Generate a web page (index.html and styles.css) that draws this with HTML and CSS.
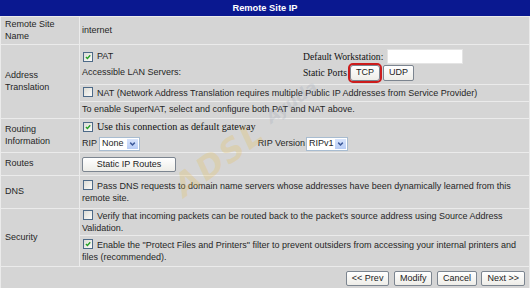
FILE: index.html
```html
<!DOCTYPE html>
<html lang="en">
<head>
  <meta charset="UTF-8" />
  <title>Remote Site IP</title>
  <link rel="stylesheet" href="styles.css">
</head>
<body>
  <div class="page">
    <div class="title">Remote Site IP</div>

    <table class="form">
      <tr>
        <td class="lbl h-name">Remote Site Name</td>
        <td class="val">internet</td>
      </tr>
      <tr>
        <td class="lbl" rowspan="3">Address Translation</td>
        <td class="val h-pat">
          <div class="pat-grid">
            <div class="line"><span class="cb on"><svg viewBox="0 0 10 10"><path d="M2.4 4.9 L4.3 6.9 L7.8 2.9" /></svg></span>PAT</div>
            <div class="line serif">Default Workstation:<span class="txt"></span></div>
            <div class="line">Accessible LAN Servers:</div>
            <div class="line serif">Static Ports <button class="btn marked">TCP</button><button class="btn">UDP</button></div>
          </div>
        </td>
      </tr>
      <tr>
        <td class="val h-nat"><span class="cb"></span>NAT (Network Address Translation requires multiple Public IP Addresses from Service Provider)</td>
      </tr>
      <tr>
        <td class="val h-nat">To enable SuperNAT, select and configure both PAT and NAT above.</td>
      </tr>
      <tr>
        <td class="lbl">Routing Information</td>
        <td class="val h-rip">
          <div class="line serif big"><span class="cb on"><svg viewBox="0 0 10 10"><path d="M2.4 4.9 L4.3 6.9 L7.8 2.9" /></svg></span>Use this connection as default gateway</div>
          <div class="line rip-line">
            <span class="rip">RIP <span class="sel w-none"><span class="sel-txt">None</span><span class="sel-btn"><svg viewBox="0 0 12 11"><path d="M3.5 4 L6 6.5 L8.5 4" /></svg></span></span></span>
            <span class="rip">RIP Version <span class="sel w-ver"><span class="sel-txt">RIPv1</span><span class="sel-btn"><svg viewBox="0 0 12 11"><path d="M3.5 4 L6 6.5 L8.5 4" /></svg></span></span></span>
          </div>
        </td>
      </tr>
      <tr>
        <td class="lbl">Routes</td>
        <td class="val h-routes"><button class="btn wide">Static IP Routes</button></td>
      </tr>
      <tr>
        <td class="lbl">DNS</td>
        <td class="val h-dns"><span class="cb"></span>Pass DNS requests to domain name servers whose addresses have been dynamically learned from this remote site.</td>
      </tr>
      <tr>
        <td class="lbl" rowspan="2">Security</td>
        <td class="val h-sec1"><span class="cb"></span>Verify that incoming packets can be routed back to the packet's source address using Source Address Validation.</td>
      </tr>
      <tr>
        <td class="val h-sec2"><span class="cb on"><svg viewBox="0 0 10 10"><path d="M2.4 4.9 L4.3 6.9 L7.8 2.9" /></svg></span>Enable the "Protect Files and Printers" filter to prevent outsiders from accessing your internal printers and files (recommended).</td>
      </tr>
      <tr>
        <td class="foot" colspan="2">
          <button class="btn">&lt;&lt; Prev</button>
          <button class="btn">Modify</button>
          <button class="btn">Cancel</button>
          <button class="btn">Next &gt;&gt;</button>
        </td>
      </tr>
    </table>

    <!-- watermark of the source site -->
    <span class="wm wm-adsl">ADSL</span>
    <span class="wm wm-ayuda">Ayuda</span>
  </div>
</body>
</html>
```

FILE: styles.css
```css
/* base */
body {
  margin: 0;
  background: #d5d5d5;
  font-family: "Liberation Sans", Arial, sans-serif;
  font-size: 9px;
  color: #262626;
}

.page {
  position: relative;
  width: 530px;
  height: 288px;
  overflow: hidden;
}

.title {
  height: 16px;
  line-height: 16px;
  background: #0a1890;
  color: #fff;
  font-weight: bold;
  font-size: 9.3px;
  text-align: center;
}

/* form table */
.form {
  width: 530px;
  table-layout: fixed;
  border-spacing: 1px;
  background: #ebebeb;
}

.form td {
  background: #d5d5d5;
  padding: 0 2px;
  vertical-align: middle;
  line-height: 11.5px;
}

.form td.lbl {
  width: 74px;
  padding: 0 0 0 4px;
}

.h-name { height: 27px; }
.h-pat { height: 39px; }
.h-nat { height: 16px; }
.h-rip { height: 31px; }
.h-routes { height: 22px; }
.h-dns { height: 32px; }
.h-sec1 { height: 26px; }
.h-sec2 { height: 30px; }

.serif {
  font-family: "Liberation Serif", "Times New Roman", serif;
  font-size: 9.6px;
  color: #111;
}

.serif.big {
  font-size: 10.2px;
}

.pat-grid {
  display: grid;
  grid-template-columns: 221px 1fr;
  grid-auto-rows: 16px;
}

.line {
  display: flex;
  align-items: center;
  height: 16px;
  white-space: nowrap;
}

/* checkbox, XP look */
.cb {
  display: inline-block;
  width: 8px;
  height: 8px;
  border: 1px solid #4d6a88;
  background: linear-gradient(135deg, #dcdcd6, #fbfbf9);
  margin: 0 4px 0 1px;
  vertical-align: -1px;
}

.cb svg {
  display: block;
  width: 8px;
  height: 8px;
}

.cb svg path {
  fill: none;
  stroke: #23a023;
  stroke-width: 1.7;
}

.txt {
  display: inline-block;
  width: 74px;
  height: 13px;
  margin-left: 4px;
  background: #fff;
  border: 1px solid #e4e4e4;
}

/* buttons */
.btn {
  height: 15px;
  padding: 0 5px;
  margin: 0;
  font-family: "Liberation Sans", Arial, sans-serif;
  font-size: 9px;
  line-height: 13px;
  color: #222;
  border: 1px solid #7c8590;
  border-radius: 2px;
  background: linear-gradient(#ffffff, #eeede8);
}

.line .btn {
  margin-left: 3px;
  height: 16px;
}

.btn.marked {
  outline: 2px solid #cc1c1c;
  outline-offset: 0;
  border-radius: 3px;
}

.btn.wide {
  width: 94px;
  margin-left: 0;
}

/* selects */
.rip-line {
  padding-top: 1px;
}

.rip {
  display: inline-flex;
  align-items: center;
}

.rip + .rip {
  margin-left: auto;
  margin-right: 179px;
}

.sel {
  display: inline-flex;
  align-items: center;
  height: 12px;
  margin-left: 2px;
  background: #fff;
  border: 1px solid #a8bcd0;
}

.sel-txt {
  flex: 1;
  padding-left: 2px;
}

.w-none { width: 39px; }
.w-ver { width: 40px; margin-left: 1px; }

.sel-btn {
  width: 11px;
  height: 10px;
  margin-right: 1px;
  background: linear-gradient(#d8e4fb, #b8cdf6);
}

.sel-btn svg {
  display: block;
  width: 11px;
  height: 10px;
}

.sel-btn svg path {
  fill: none;
  stroke: #3d5a9a;
  stroke-width: 1.6;
}

/* footer buttons */
.form td.foot {
  height: 23px;
  text-align: right;
  padding: 0 4px 4px 0;
}

.foot .btn {
  margin-left: 2px;
}

/* watermark */
.wm {
  position: absolute;
  font-family: "DejaVu Sans", sans-serif;
  font-weight: bold;
  font-style: italic;
  transform: rotate(-36deg);
  pointer-events: none;
}

.wm-adsl {
  left: 168px;
  top: 140px;
  font-size: 32px;
  color: rgba(232, 190, 80, 0.25);
  letter-spacing: 2px;
}

.wm-ayuda {
  left: 262px;
  top: 92px;
  font-size: 17px;
  color: rgba(140, 150, 175, 0.2);
}
```
